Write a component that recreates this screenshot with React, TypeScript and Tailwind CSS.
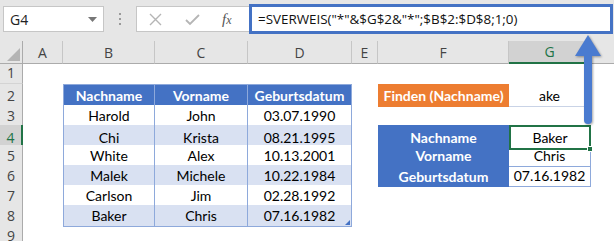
import React from "react";

const F = { fontFamily: "Lato, 'Open Sans', sans-serif" };
const UI = { fontFamily: "'Open Sans', 'Noto Sans', sans-serif" };

const colCls =
  "grid grid-cols-[23px_40px_92px_93px_104px_26px_131px_82px_1fr]";

function RowHeader({ n, sel }: { n: number; sel?: boolean }) {
  return (
    <div
      className={
        "flex items-center justify-center border-b border-[#d4d4d4] text-[14px] " +
        (sel
          ? "bg-[#d2d2d2] border-r-2 border-r-[#217346] text-[#217346]"
          : "bg-[#e6e6e6] border-r border-r-[#ababab] text-[#444]")
      }
      style={UI}
    >
      {n}
    </div>
  );
}

const tCell =
  "flex items-center justify-center border-r border-b border-[#8ea9db] text-[14px] text-black";

export default function App() {
  const data: [string, string, string][] = [
    ["Harold", "John", "03.07.1990"],
    ["Chi", "Krista", "08.21.1995"],
    ["White", "Alex", "10.13.2001"],
    ["Malek", "Michele", "10.22.1984"],
    ["Carlson", "Jim", "02.28.1992"],
    ["Baker", "Chris", "07.16.1982"],
  ];
  const side: Record<number, [string, string]> = {
    4: ["Nachname", "Baker"],
    5: ["Vorname", "Chris"],
    6: ["Geburtsdatum", "07.16.1982"],
  };

  return (
    <div className="relative w-[614px] h-[241px] overflow-hidden bg-white">
      {/* Formula bar */}
      <div className="flex items-start h-[41px] bg-[#e6e6e6] pt-[4px]">
        <div className="ml-[3px] mt-[2px] w-[101px] h-[26px] bg-white border border-[#c6c6c6] flex items-center justify-between pl-[6px] pr-[6px]">
          <span className="text-[14px] text-[#222]" style={UI}>
            G4
          </span>
          <svg width="9" height="5" viewBox="0 0 9 5">
            <path d="M0 0H9L4.5 5Z" fill="#777" />
          </svg>
        </div>
        <div className="w-[32px] h-[30px] flex flex-col items-center justify-center gap-[3px]">
          <span className="w-[2px] h-[2px] bg-[#9a9a9a]" />
          <span className="w-[2px] h-[2px] bg-[#9a9a9a]" />
          <span className="w-[2px] h-[2px] bg-[#9a9a9a]" />
        </div>
        <div className="mt-[2px] w-[113px] h-[26px] bg-white border border-r-0 border-[#c6c6c6] flex items-center pl-[12px]">
          <svg width="13" height="13" viewBox="0 0 13 13">
            <path d="M1 1L12 12M12 1L1 12" stroke="#b5b5b5" strokeWidth="1.4" />
          </svg>
          <svg width="15" height="13" viewBox="0 0 15 13" className="ml-[23px]">
            <path d="M1 7L5 11L14 2" stroke="#b5b5b5" strokeWidth="1.8" fill="none" />
          </svg>
          <span
            className="ml-[22px] text-[15px] italic text-[#555]"
            style={{ fontFamily: "'Liberation Serif', serif" }}
          >
            f<span className="text-[12px]">x</span>
          </span>
        </div>
        <div className="w-[364px] h-[30px] bg-white border-[3px] border-[#4472c4] flex items-center pl-[6px]">
          <span className="text-[13.4px] text-[#111] whitespace-nowrap" style={UI}>
            =SVERWEIS("*"&amp;$G$2&amp;"*";$B$2:$D$8;1;0)
          </span>
        </div>
      </div>

      {/* Column headers */}
      <div className={colCls + " h-[21px] text-[14px] text-[#444]"} style={UI}>
        <div className="relative bg-[#e6e6e6] border-r border-b border-[#ababab]">
          <svg width="13" height="13" viewBox="0 0 13 13" className="absolute right-[2px] bottom-[2px]">
            <path d="M13 0V13H0Z" fill="#b4b4b4" />
          </svg>
        </div>
        {["A", "B", "C", "D", "E", "F"].map((l) => (
          <div key={l} className="flex items-center justify-center bg-[#e6e6e6] border-r border-[#c6c6c6] border-b border-b-[#ababab]">
            {l}
          </div>
        ))}
        <div className="flex items-center justify-center bg-[#d2d2d2] border-r border-[#c6c6c6] border-b-2 border-b-[#217346] text-[#217346]">
          G
        </div>
        <div className="bg-[#e6e6e6] border-b border-[#ababab]" />
      </div>

      {/* Row 1 */}
      <div className={colCls + " h-[22px]"}>
        <RowHeader n={1} />
      </div>

      {/* Row 2 */}
      <div className={colCls + " h-[21px]"} style={F}>
        <RowHeader n={2} />
        <div />
        {["Nachname", "Vorname", "Geburtsdatum"].map((t, i) => (
          <div
            key={t}
            className={
              "flex items-center justify-center bg-[#4472c4] text-white font-bold text-[14px] border-t border-r border-b border-[#8ea9db] " +
              (i === 0 ? "border-l" : "")
            }
          >
            {t}
          </div>
        ))}
        <div />
        <div className="flex items-center justify-center bg-[#ed7d31] text-white font-bold text-[14px]">
          Finden (Nachname)
        </div>
        <div className="flex items-center justify-center border-r border-b border-[#c9d3e6] text-[14px] text-black">
          ake
        </div>
      </div>

      {/* Rows 3-9 */}
      {[3, 4, 5, 6, 7, 8, 9].map((r) => {
        const d = data[r - 3];
        const shade = r % 2 === 0 ? "bg-[#d9e1f2]" : "bg-white";
        const s = side[r];
        return (
          <div key={r} className={colCls + " h-[20px]"} style={F}>
            <RowHeader n={r} sel={r === 4} />
            <div />
            {d ? (
              <>
                <div className={tCell + " border-l " + shade}>{d[0]}</div>
                <div className={tCell + " " + shade}>{d[1]}</div>
                <div className={tCell + " relative " + shade}>
                  {d[2]}
                  {r === 8 && (
                    <svg width="5" height="5" viewBox="0 0 5 5" className="absolute right-[1px] bottom-[1px]">
                      <path d="M5 0V5H0Z" fill="#4472c4" />
                    </svg>
                  )}
                </div>
              </>
            ) : (
              <>
                <div />
                <div />
                <div />
              </>
            )}
            <div />
            {s ? (
              <>
                <div
                  className={
                    "flex items-center justify-center bg-[#4472c4] text-white font-bold text-[14px] " +
                    (r < 6 ? "border-b border-[#8ea9db]" : "")
                  }
                >
                  {s[0]}
                </div>
                {r === 4 ? (
                  <div className="relative flex items-center justify-center border-2 border-[#217346] text-[14px] text-black">
                    {s[1]}
                    <span className="absolute right-[-4px] bottom-[-4px] w-[6px] h-[6px] bg-[#217346] border border-white" />
                  </div>
                ) : (
                  <div className={tCell}>{s[1]}</div>
                )}
              </>
            ) : (
              <>
                <div />
                <div />
              </>
            )}
          </div>
        );
      })}

      {/* Arrow */}
      <svg
        className="absolute left-[570px] top-[30px]"
        width="36"
        height="100"
        viewBox="0 0 36 100"
        style={{ filter: "drop-shadow(1px 1px 1px rgba(0,0,0,0.35))" }}
      >
        <path d="M14 24H22V90A4 4 0 0 1 14 90Z" fill="#4a7bd0" />
        <path d="M18 5L31 26H5Z" fill="#4a7bd0" />
      </svg>
    </div>
  );
}
